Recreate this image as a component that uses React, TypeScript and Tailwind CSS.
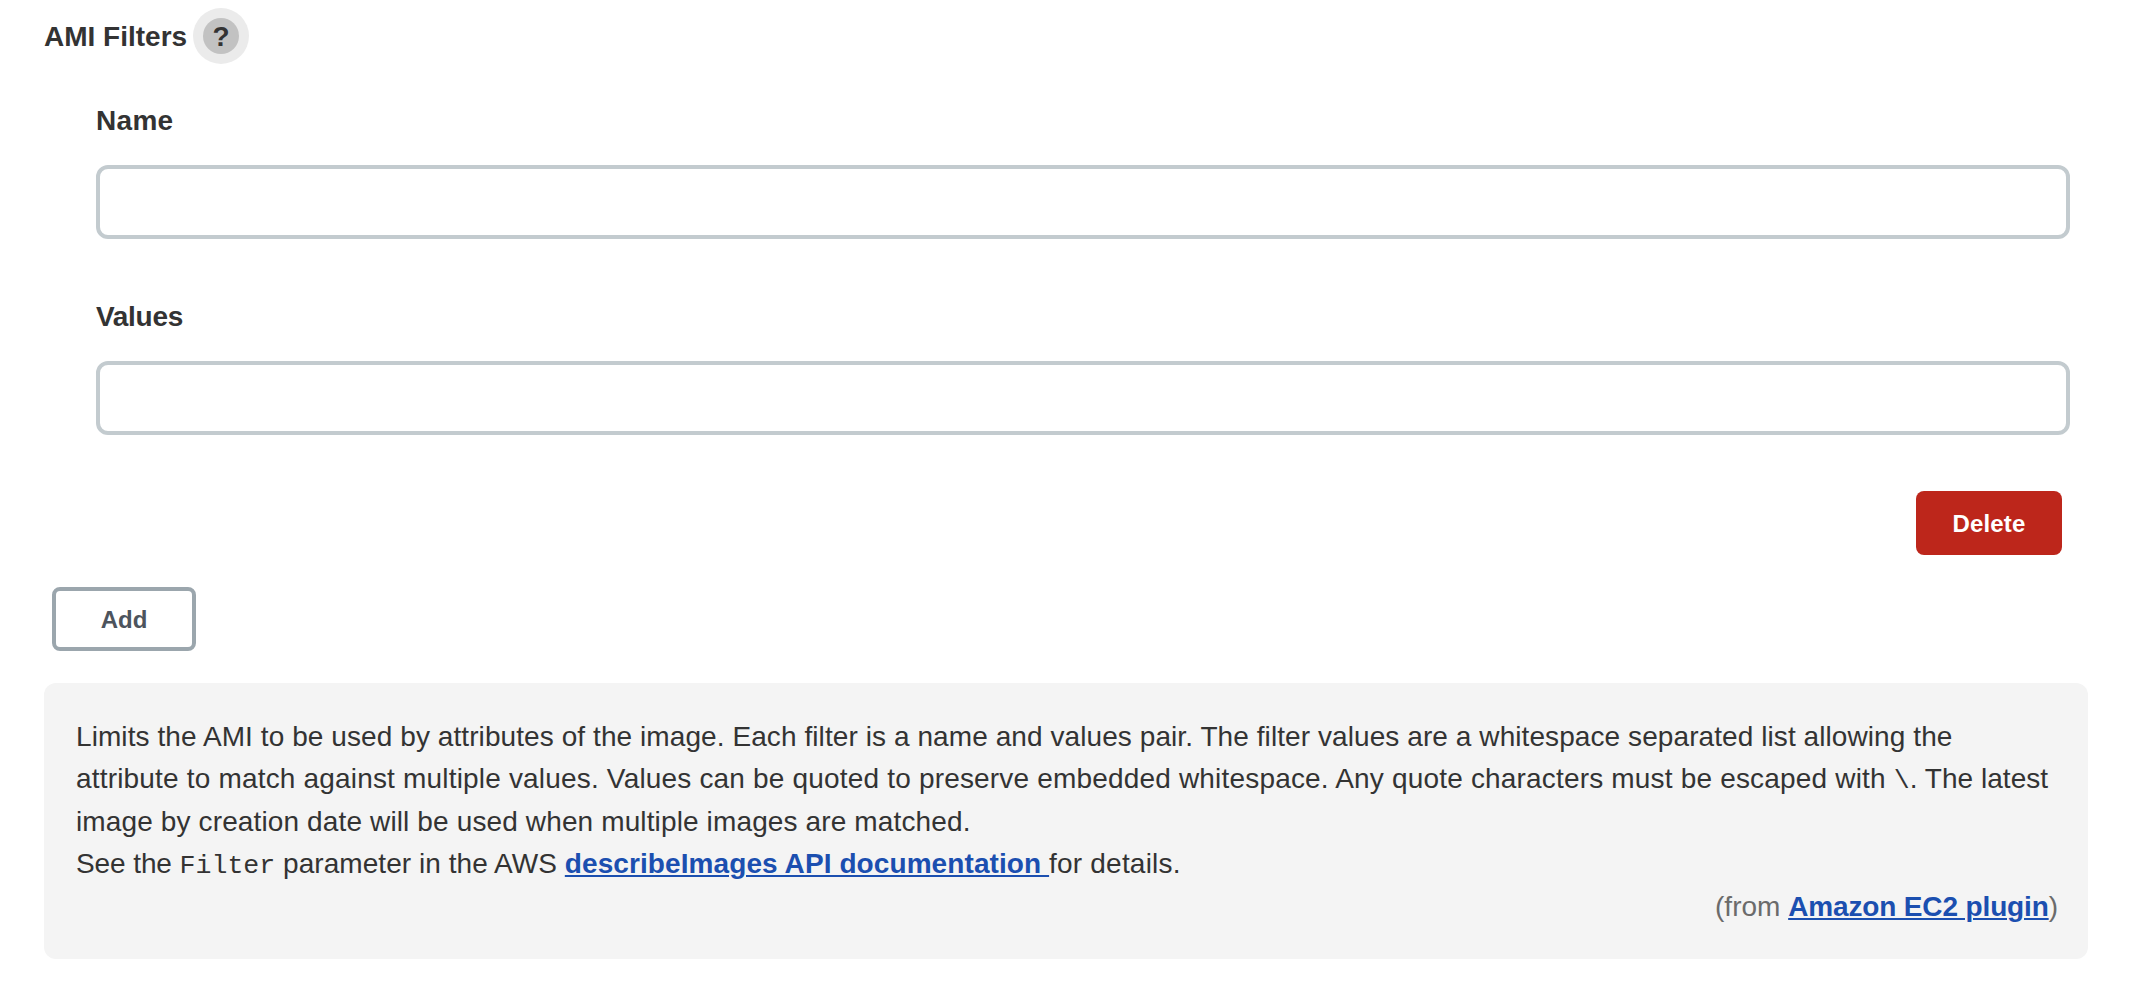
import React from 'react';

function Field({ label, id, tracking }: { label: string; id: string; tracking: string }) {
  return (
    <div className="flex flex-col">
      <label htmlFor={id} className={`pt-px text-[28px] leading-10 font-bold ${tracking}`}>
        {label}
      </label>
      <input
        id={id}
        type="text"
        className="mt-6 h-[74px] w-full rounded-xl border-4 border-[#c3cbcf] bg-white px-4 text-[28px] outline-none"
      />
    </div>
  );
}

function HelpButton() {
  return (
    <button
      type="button"
      aria-label="Help for AMI Filters"
      className="flex size-14 items-center justify-center rounded-full bg-[#ebebeb]"
    >
      <span className="flex size-9 items-center justify-center rounded-full bg-[#c2c2c2] pt-px text-[28px] leading-9 font-bold">
        ?
      </span>
    </button>
  );
}

const linkClass = 'font-bold text-[#1b4fb0] underline decoration-2 underline-offset-[2px]';

export default function App() {
  return (
    <main className="flex min-h-screen flex-col bg-white pt-2 pr-[46px] pl-11 font-['Liberation_Sans',sans-serif] text-[#333333]">
      <div className="flex h-14 items-center">
        <h2 className="w-[149px] pt-0.5 text-[28px] leading-[54px] font-bold whitespace-nowrap">AMI Filters</h2>
        <HelpButton />
      </div>

      <section className="mt-9 mr-[18px] ml-[52px] flex flex-col">
        <Field label="Name" id="filter-name" tracking="tracking-[0.3px]" />
        <div className="h-[57px]" />
        <Field label="Values" id="filter-values" tracking="tracking-[-0.3px]" />
        <button
          type="button"
          className="mt-14 mr-2 h-16 w-[146px] self-end rounded-lg bg-[#bd261b] pt-0.5 text-2xl leading-[62px] font-bold tracking-[0.2px] text-white"
        >
          Delete
        </button>
      </section>

      <button
        type="button"
        className="mt-8 ml-2 flex h-16 w-36 items-center justify-center rounded-lg border-4 border-[#9ba6ad] bg-white pt-0.5 text-2xl leading-[54px] font-bold text-[#4d545d]"
      >
        Add
      </button>

      <section className="mt-8 flex h-[276px] flex-col rounded-xl bg-[#f4f4f4] px-8 pt-[32.6px] text-[28px] leading-[42.5px] whitespace-pre">
        <p className="tracking-[0.08px]">
          Limits the AMI to be used by attributes of the image. Each filter is a name and values pair. The filter values are a whitespace separated list allowing the
        </p>
        <p>
          <span className="tracking-[0.18px]">
            {'attribute to match against multiple values. Values can be quoted to preserve embedded whitespace. Any quote characters must be escaped with '}
          </span>
          <code className="font-['Liberation_Mono',monospace] text-[26.6px] leading-none">{'\\'}</code>
          <span className="tracking-[0.03px]">. The latest</span>
        </p>
        <p className="tracking-[0.13px]">image by creation date will be used when multiple images are matched.</p>
        <p>
          <span className="tracking-[-0.1px]">{'See the '}</span>
          <code className="font-['Liberation_Mono',monospace] text-[26.6px] leading-none">Filter</code>
          <span className="tracking-[0.05px]">{' parameter in the AWS '}</span>
          <a href="#describe-images" className={`tracking-[0.09px] ${linkClass}`}>
            {'describeImages API documentation '}
          </a>
          <span className="tracking-[0.2px]">for details.</span>
        </p>
        <p className="text-right text-[#6b6b6b]">
          {'(from '}
          <a href="#ec2-plugin" className={`tracking-[-0.14px] ${linkClass}`}>
            Amazon EC2 plugin
          </a>
          <span className="tracking-[-2px]">)</span>
        </p>
      </section>
    </main>
  );
}
